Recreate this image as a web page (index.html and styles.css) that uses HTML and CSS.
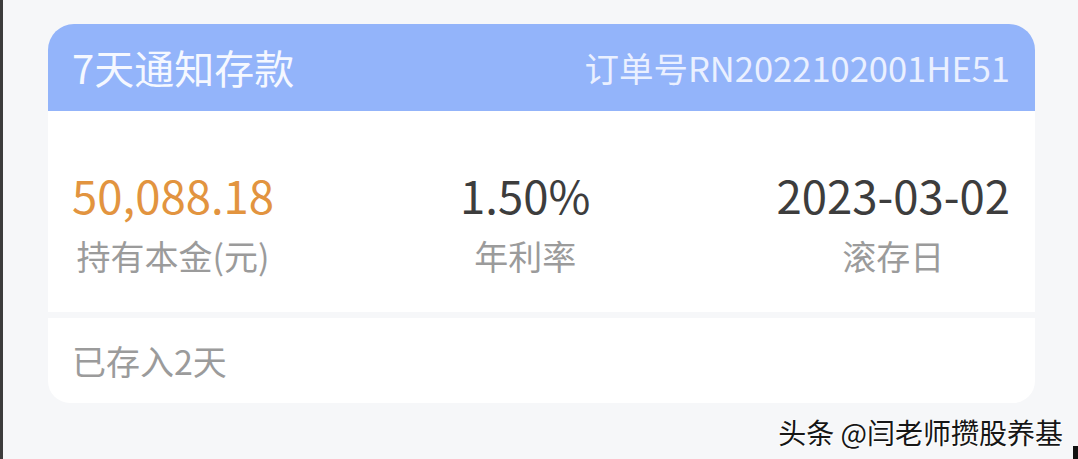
FILE: index.html
```html
<!DOCTYPE html>
<html lang="zh-CN">
<head>
<meta charset="utf-8">
<title>7天通知存款</title>
<link rel="stylesheet" href="styles.css">
</head>
<body>
<div id="page">
    <div class="card">
        <div class="cardHead">
            <span class="title">7天通知存款</span>
            <span class="orderNo">订单号RN2022102001HE51</span>
        </div>
        <div class="cardBody">
            <div class="col">
                <p class="value orange">50,088.18</p>
                <p class="label">持有本金(元)</p>
            </div>
            <div class="col">
                <p class="value">1.50%</p>
                <p class="label">年利率</p>
            </div>
            <div class="col">
                <p class="value">2023-03-02</p>
                <p class="label">滚存日</p>
            </div>
        </div>
        <div class="cardFoot">已存入2天</div>
    </div>
    <div class="bottomRow">
        <span class="watermark">头条 @闫老师攒股养基</span>
        <span class="mark"></span>
    </div>
</div>
</body>
</html>
```

FILE: styles.css
```css
html, body {
    margin: 0;
    padding: 0;
}

body {
    background: #f6f7f9;
    font-family: "Noto Sans CJK SC", "Noto Sans", sans-serif;
    border-left: 3px solid #3c3c3c;
}

p {
    margin: 0;
}

#page {
    box-sizing: border-box;
    height: 459px;
    padding: 24px 43px 0 45px;
    overflow: hidden;
}

.cardHead {
    display: flex;
    justify-content: space-between;
    align-items: center;
    height: 87px;
    padding: 0 25px 0 24px;
    background: #93b4fa;
    border-radius: 26px 26px 0 0;
}

.title {
    font-size: 40px;
    line-height: 87px;
    color: #f5f8ff;
}

.orderNo {
    font-size: 34.5px;
    line-height: 87px;
    color: #eaf0ff;
}

.cardBody {
    display: flex;
    justify-content: space-between;
    padding: 53px 25px 34px 24px;
    background: #fff;
}

.col {
    text-align: center;
}

.value {
    font-size: 45.5px;
    line-height: 60px;
    color: #3d3d3d;
}

.orange {
    color: #e2943f;
}

.label {
    margin-top: 10px;
    font-size: 34px;
    line-height: 44px;
    color: #9b9b9b;
}

.cardFoot {
    margin-top: 6px;
    height: 85px;
    padding-left: 24px;
    font-size: 34px;
    line-height: 85px;
    color: #9b9b9b;
    background: #fff;
    border-radius: 0 0 22px 22px;
}

.bottomRow {
    display: flex;
    justify-content: flex-end;
    align-items: flex-end;
    height: 56px;
    margin-right: -43px;
}

.watermark {
    margin-bottom: 7px;
    font-size: 28px;
    line-height: 40px;
    color: #161616;
    text-shadow: 1px 1px 0 #fff, -1px 0 0 #fff;
}

.mark {
    width: 5px;
    height: 13px;
    margin-left: 10px;
    background: #111;
}
```
